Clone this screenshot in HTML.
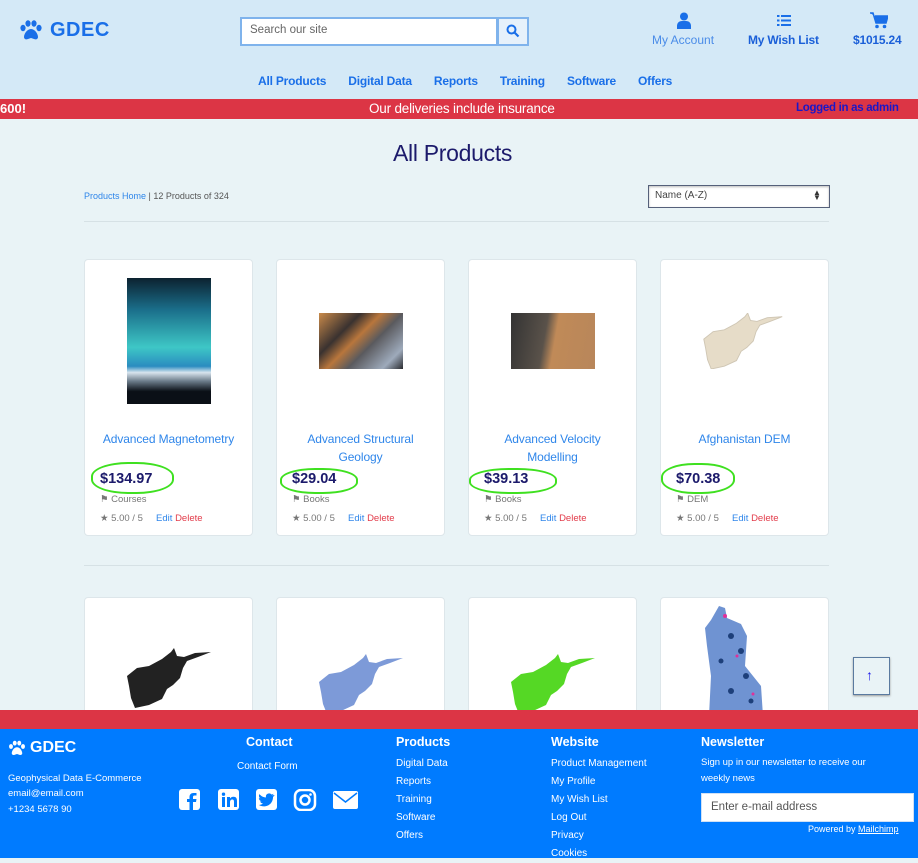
<!DOCTYPE html>
<html><head><meta charset="utf-8"><style>
*{box-sizing:border-box;margin:0;padding:0}
body{width:918px;height:858px;overflow:hidden;position:relative;background:#e9f3f6;font-family:"Liberation Sans Narrow","Liberation Sans",sans-serif}
.a{position:absolute;white-space:nowrap}
.hdr{left:0;top:0;width:918px;height:99px;background:#d4e9f7}
.nav a{color:#1a6fe8;font-size:12px;font-weight:bold;text-decoration:none;margin:0 11px;letter-spacing:-0.2px}
.card{position:absolute;background:#fff;border:1px solid #dde6ea;border-radius:4px;width:169px}
.ttl{position:absolute;left:0;width:100%;text-align:center;color:#2f86ea;font-size:12px;line-height:18px;letter-spacing:-0.1px}
.pr{position:absolute;left:15px;color:#1c1a6b;font-weight:bold;font-size:14.5px}
.ring{position:absolute;border:2.5px solid #3fe020;border-radius:45%}
.tag{position:absolute;left:15px;font-size:9.5px;color:#777}
.st{position:absolute;left:15px;font-size:9.5px;color:#777}
.st b{color:#2f86ea;font-weight:normal}.st i{color:#e23b4a;font-style:normal}
.ft{color:#fff;font-size:10px}
.fh{color:#fff;font-weight:bold;font-size:12.5px}
</style></head><body>
<div class="a hdr"></div>
<svg class="a" style="left:19px;top:20px" width="24" height="20" viewBox="0 0 24 20"><ellipse cx="4" cy="8" rx="2.6" ry="3.2" fill="#1a6fe8"/><ellipse cx="9" cy="3.5" rx="2.6" ry="3.2" fill="#1a6fe8"/><ellipse cx="15" cy="3.5" rx="2.6" ry="3.2" fill="#1a6fe8"/><ellipse cx="20" cy="8" rx="2.6" ry="3.2" fill="#1a6fe8"/><path d="M12 9c-4 0-7 5-7 8 0 2 2 3 4 2l3-1 3 1c2 1 4 0 4-2 0-3-3-8-7-8z" fill="#1a6fe8"/></svg>
<div class="a" style="left:50px;top:19px;color:#1a6fe8;font-weight:bold;font-size:20px;letter-spacing:0.5px">GDEC</div>
<div class="a" style="left:240px;top:17px;width:258px;height:29px;background:#fff;border:2px solid #7fb3ec"></div>
<div class="a" style="left:250px;top:24px;font-size:11.5px;color:#666">Search our site</div>
<div class="a" style="left:497px;top:17px;width:32px;height:29px;border:2px solid #7fb3ec;background:#e6f1fb"></div>
<svg class="a" style="left:506px;top:24px" width="14" height="14" viewBox="0 0 14 14"><circle cx="5.5" cy="5.5" r="4" stroke="#1a6fe8" stroke-width="2" fill="none"/><path d="M8.5 8.5l4 4" stroke="#1a6fe8" stroke-width="2.2"/></svg>
<svg class="a" style="left:676px;top:12px" width="16" height="17" viewBox="0 0 16 17"><circle cx="8" cy="4.5" r="4" fill="#1a6fe8"/><path d="M1 17v-3c0-3 2-5 5-5h4c3 0 5 2 5 5v3z" fill="#1a6fe8"/></svg>
<div class="a" style="left:652px;top:33px;color:#4a8ce8;font-size:12px">My Account</div>
<svg class="a" style="left:777px;top:14px" width="14" height="13" viewBox="0 0 14 13"><g fill="#1a6fe8"><rect x="0" y="1" width="2.5" height="2"/><rect x="4" y="1" width="10" height="2"/><rect x="0" y="5.5" width="2.5" height="2"/><rect x="4" y="5.5" width="10" height="2"/><rect x="0" y="10" width="2.5" height="2"/><rect x="4" y="10" width="10" height="2"/></g></svg>
<div class="a" style="left:748px;top:33px;color:#1a5fd8;font-size:12px;font-weight:bold;letter-spacing:-0.2px">My Wish List</div>
<svg class="a" style="left:870px;top:12px" width="18" height="17" viewBox="0 0 18 17"><path d="M0 1h3l3 10h10l2-7H5" fill="#1a6fe8" stroke="#1a6fe8" stroke-width="1.5"/><circle cx="7" cy="14.5" r="1.8" fill="#1a6fe8"/><circle cx="14.5" cy="14.5" r="1.8" fill="#1a6fe8"/></svg>
<div class="a" style="left:853px;top:33px;color:#1a5fd8;font-size:12px;font-weight:bold;letter-spacing:-0.2px">$1015.24</div>
<div class="a nav" style="left:247px;top:72px"><a>All Products</a><a>Digital Data</a><a>Reports</a><a>Training</a><a>Software</a><a>Offers</a></div>
<div class="a" style="left:0;top:99px;width:918px;height:20px;background:#dc3545"></div>
<div class="a" style="left:0;top:101px;color:#fff;font-size:13px;font-weight:bold">600!</div>
<div class="a" style="left:369px;top:101px;color:#fff;font-size:13.5px;letter-spacing:-0.2px">Our deliveries include insurance</div>
<div class="a" style="left:796px;top:102px;color:#1a17c8;font-size:11.5px;font-weight:bold;letter-spacing:-0.3px">Logged in as admin</div>
<div class="a" style="left:393px;top:140px;color:#1c1a6b;font-size:23px;letter-spacing:-0.3px">All Products</div>
<div class="a" style="left:84px;top:191px;font-size:9px;color:#555"><span style="color:#2f86ea">Products Home</span> | 12 Products of 324</div>
<div class="a" style="left:648px;top:185px;width:182px;height:23px;background:#fff;border:1px solid #55607a;box-shadow:inset 0 1px 2px #bbb"></div>
<div class="a" style="left:655px;top:190px;font-size:10px;color:#444">Name (A-Z)</div>
<div class="a" style="left:813px;top:190px;font-size:8px;color:#333;line-height:5px">&#9650;<br>&#9660;</div>
<div class="a" style="left:84px;top:221px;width:745px;height:1px;background:#d6e1e5"></div>
<div class="a" style="left:84px;top:565px;width:745px;height:1px;background:#d6e1e5"></div>

<div class="card" style="left:84px;top:259px;height:277px">
 <div class="a" style="left:42px;top:18px;width:84px;height:126px;background:linear-gradient(180deg,#0c2230 0%,#1a6e8a 25%,#3ec7c6 55%,#2a8cc0 70%,#d8e4ee 75%,#6a7a88 82%,#0a0f16 90%)"></div>
 <div class="ttl" style="top:170px">Advanced Magnetometry</div>
 <div class="ring" style="left:6px;top:202px;width:83px;height:32px"></div>
 <div class="pr" style="top:211px">$134.97</div>
 <div class="tag" style="top:234px">&#9873; Courses</div>
 <div class="st" style="top:253px">&#9733; 5.00 / 5 &nbsp;&nbsp;&nbsp; <b>Edit</b> <i>Delete</i></div>
</div>
<div class="card" style="left:276px;top:259px;height:277px">
 <div class="a" style="left:42px;top:53px;width:84px;height:56px;background:linear-gradient(135deg,#c98a4a,#3a3230 30%,#b8763c 45%,#5a5a5e 60%,#9eaabb 85%,#2a2c30)"></div>
 <div class="ttl" style="top:170px">Advanced Structural<br>Geology</div>
 <div class="ring" style="left:3px;top:208px;width:78px;height:26px"></div>
 <div class="pr" style="top:211px">$29.04</div>
 <div class="tag" style="top:234px">&#9873; Books</div>
 <div class="st" style="top:253px">&#9733; 5.00 / 5 &nbsp;&nbsp;&nbsp; <b>Edit</b> <i>Delete</i></div>
</div>
<div class="card" style="left:468px;top:259px;height:277px">
 <div class="a" style="left:42px;top:53px;width:84px;height:56px;background:linear-gradient(100deg,#333 0%,#5a524a 40%,#c08a58 52%,#b8865a 100%)"></div>
 <div class="ttl" style="top:170px">Advanced Velocity<br>Modelling</div>
 <div class="ring" style="left:0;top:208px;width:88px;height:26px"></div>
 <div class="pr" style="top:211px">$39.13</div>
 <div class="tag" style="top:234px">&#9873; Books</div>
 <div class="st" style="top:253px">&#9733; 5.00 / 5 &nbsp;&nbsp;&nbsp; <b>Edit</b> <i>Delete</i></div>
</div>
<div class="card" style="left:660px;top:259px;height:277px">
 <svg class="a" style="left:40px;top:53px" width="84" height="56" viewBox="0 0 84 60"><path d="M0 28L10 20 22 18 35 11 44 4 47 0 50 8 57 9 68 5 84 4 71 9 60 13 56 20 53 30 46 37 40 41 35 51 22 57 8 60 4 50 2 38Z" fill="#e6dcc8" stroke="#cfc6b4"/></svg>
 <div class="ttl" style="top:170px">Afghanistan DEM</div>
 <div class="ring" style="left:0;top:203px;width:74px;height:31px"></div>
 <div class="pr" style="top:211px">$70.38</div>
 <div class="tag" style="top:234px">&#9873; DEM</div>
 <div class="st" style="top:253px">&#9733; 5.00 / 5 &nbsp;&nbsp;&nbsp; <b>Edit</b> <i>Delete</i></div>
</div>
<div class="card" style="left:84px;top:597px;height:140px"><svg class="a" style="left:42px;top:50px" width="84" height="60" viewBox="0 0 84 60"><path d="M0 28L10 20 22 18 35 11 44 4 47 0 50 8 57 9 68 5 84 4 71 9 60 13 56 20 53 30 46 37 40 41 35 51 22 57 8 60 4 50 2 38Z" fill="#222"/></svg></div>
<div class="card" style="left:276px;top:597px;height:140px"><svg class="a" style="left:42px;top:56px" width="84" height="60" viewBox="0 0 84 60"><path d="M0 28L10 20 22 18 35 11 44 4 47 0 50 8 57 9 68 5 84 4 71 9 60 13 56 20 53 30 46 37 40 41 35 51 22 57 8 60 4 50 2 38Z" fill="#7d9ad8"/></svg></div>
<div class="card" style="left:468px;top:597px;height:140px"><svg class="a" style="left:42px;top:56px" width="84" height="60" viewBox="0 0 84 60"><path d="M0 28L10 20 22 18 35 11 44 4 47 0 50 8 57 9 68 5 84 4 71 9 60 13 56 20 53 30 46 37 40 41 35 51 22 57 8 60 4 50 2 38Z" fill="#55d825"/></svg></div>
<div class="card" style="left:660px;top:597px;height:140px"><svg class="a" style="left:40px;top:8px" width="70" height="110" viewBox="0 0 70 110"><path d="M18 0L24 2 26 12 40 18 46 30 44 60 60 80 62 110 8 110 10 70 6 40 4 22 10 14Z" fill="#6f93d2"/><g fill="#1d3f7a"><circle cx="30" cy="30" r="3"/><circle cx="40" cy="45" r="3"/><circle cx="20" cy="55" r="2.5"/><circle cx="45" cy="70" r="3"/><circle cx="30" cy="85" r="3"/><circle cx="50" cy="95" r="2.5"/></g><g fill="#e0309a"><circle cx="24" cy="10" r="2"/><circle cx="36" cy="50" r="1.5"/><circle cx="52" cy="88" r="1.5"/></g></svg></div>
<div class="a" style="left:853px;top:657px;width:37px;height:38px;border:1px solid #5a7aa0;background:#e9f3f6;box-shadow:0 1px 2px #999"></div>
<div class="a" style="left:866px;top:667px;color:#1a17e8;font-size:14px">&#8593;</div>

<div class="a" style="left:0;top:710px;width:918px;height:19px;background:#dc3545"></div>
<div class="a" style="left:0;top:729px;width:918px;height:129px;background:#007bff"></div>
<svg class="a" style="left:8px;top:740px" width="18" height="16" viewBox="0 0 24 20"><ellipse cx="4" cy="8" rx="2.6" ry="3.2" fill="#fff"/><ellipse cx="9" cy="3.5" rx="2.6" ry="3.2" fill="#fff"/><ellipse cx="15" cy="3.5" rx="2.6" ry="3.2" fill="#fff"/><ellipse cx="20" cy="8" rx="2.6" ry="3.2" fill="#fff"/><path d="M12 9c-4 0-7 5-7 8 0 2 2 3 4 2l3-1 3 1c2 1 4 0 4-2 0-3-3-8-7-8z" fill="#fff"/></svg>
<div class="a fh" style="left:30px;top:739px;font-size:16px">GDEC</div>
<div class="a ft" style="left:8px;top:773px;font-size:9.5px">Geophysical Data E-Commerce</div>
<div class="a ft" style="left:8px;top:788px;font-size:9.5px">email@email.com</div>
<div class="a ft" style="left:8px;top:804px;font-size:9.5px">+1234 5678 90</div>
<div class="a fh" style="left:246px;top:735px">Contact</div>
<div class="a ft" style="left:237px;top:761px">Contact Form</div>
<svg class="a" style="left:179px;top:789px" width="180" height="22" viewBox="0 0 180 22">
<rect x="0" y="0" width="21" height="21" rx="3" fill="#fff"/><path d="M14 21v-8h3l.5-3H14V8c0-1 .5-1.5 1.5-1.5h2V4h-3c-2.5 0-4 1.5-4 4v2H8v3h2.5v8z" fill="#007bff"/>
<rect x="39" y="0" width="21" height="21" rx="3" fill="#fff"/><path d="M43 8h3v10h-3zM44.5 3.5a1.7 1.7 0 110 3.4 1.7 1.7 0 010-3.4zM48 8h3v1.5c.6-1 1.8-1.8 3.5-1.8 3 0 3.5 2 3.5 4.5V18h-3v-5c0-1.3-.2-2.5-1.7-2.5S51 11.5 51 13v5h-3z" fill="#007bff"/>
<rect x="77" y="0" width="21" height="21" rx="3" fill="#fff"/><path d="M95 6c-.6.3-1.2.4-1.9.5.7-.4 1.2-1 1.4-1.8-.6.4-1.3.6-2 .8a3.2 3.2 0 00-5.5 2.9C84.3 8.3 82 7 80.4 5.1c-.9 1.5-.4 3.4 1 4.3-.5 0-1-.2-1.5-.4 0 1.6 1.1 2.9 2.6 3.2-.5.1-1 .2-1.5.1.4 1.3 1.6 2.2 3 2.2A6.5 6.5 0 0180 16c1.4.9 3.1 1.4 4.9 1.4 6 0 9.3-5 9.1-9.5.7-.5 1.2-1.1 1.6-1.8z" fill="#007bff"/>
<rect x="116" y="1" width="20" height="20" rx="6" fill="none" stroke="#fff" stroke-width="2.5"/><circle cx="126" cy="11" r="4.5" fill="none" stroke="#fff" stroke-width="2.5"/><circle cx="131.5" cy="5.5" r="1.3" fill="#fff"/>
<rect x="154" y="2" width="25" height="18" rx="2" fill="#fff"/><path d="M155 4l11.5 9L178 4" fill="none" stroke="#007bff" stroke-width="1.5"/>
</svg>
<div class="a fh" style="left:396px;top:735px">Products</div>
<div class="a ft" style="left:396px;top:755px;line-height:18px">Digital Data<br>Reports<br>Training<br>Software<br>Offers</div>
<div class="a fh" style="left:551px;top:735px">Website</div>
<div class="a ft" style="left:551px;top:755px;line-height:18px">Product Management<br>My Profile<br>My Wish List<br>Log Out<br>Privacy<br>Cookies</div>
<div class="a fh" style="left:701px;top:735px">Newsletter</div>
<div class="a ft" style="left:701px;top:755px;line-height:16px;font-size:9.5px">Sign up in our newsletter to receive our<br>weekly news</div>
<div class="a" style="left:701px;top:793px;width:213px;height:29px;background:#fff;border:1px solid #cfe0f5"></div>
<div class="a" style="left:711px;top:801px;font-size:11.5px;color:#555">Enter e-mail address</div>
<div class="a ft" style="left:808px;top:824px;font-size:9px">Powered by <u>Mailchimp</u></div>
</body></html>
